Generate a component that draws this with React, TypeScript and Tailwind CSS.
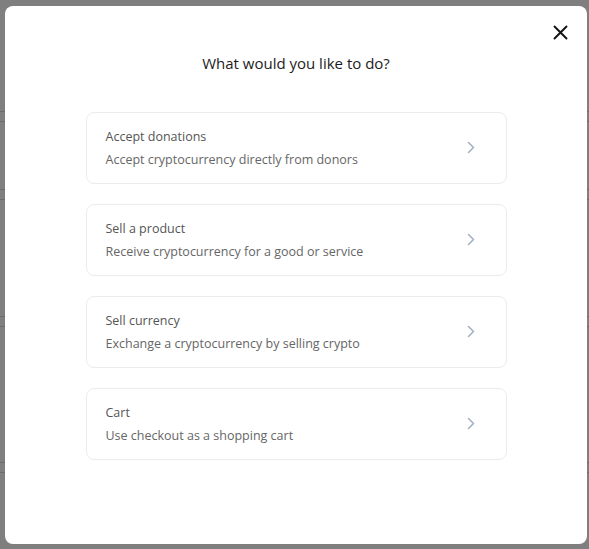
const options = [
  { title: "Accept donations", desc: "Accept cryptocurrency directly from donors" },
  { title: "Sell a product", desc: "Receive cryptocurrency for a good or service" },
  { title: "Sell currency", desc: "Exchange a cryptocurrency by selling crypto" },
  { title: "Cart", desc: "Use checkout as a shopping cart" },
];

function Chevron() {
  return (
    <svg width="8" height="13" viewBox="0 0 8 13" fill="none" className="shrink-0">
      <path d="M1.5 1.5L6.5 6.5L1.5 11.5" stroke="#a3b1c6" strokeWidth="1.6" strokeLinecap="round" strokeLinejoin="round" />
    </svg>
  );
}

export default function App() {
  return (
    <div className="relative h-[549px] w-[589px] overflow-hidden bg-white" style={{ fontFamily: '"Open Sans", "Noto Sans", sans-serif' }}>
      {/* page behind the overlay */}
      <div className="flex flex-col">
        <div className="h-[111px]" />
        <div className="h-[11px] border-y border-[#d6d6d6]" />
        <div className="h-[67px]" />
        <div className="h-[11px] border-y border-[#d6d6d6]" />
        <div className="h-[116px]" />
        <div className="h-[11px] border-y border-[#d6d6d6]" />
        <div className="h-[135px]" />
        <div className="h-[11px] border-y border-[#d6d6d6]" />
      </div>

      <div className="absolute inset-0 flex bg-black/50 pl-[5px] pr-[2px] pt-[6px] pb-[5px]">
        <div className="relative flex flex-1 flex-col items-center rounded-lg bg-white">
          <button className="absolute right-[17px] top-[17px] p-0.5">
            <svg width="15" height="15" viewBox="0 0 15 15" fill="none">
              <path d="M1.5 1.5L13.5 13.5M13.5 1.5L1.5 13.5" stroke="#111" strokeWidth="1.9" strokeLinecap="round" />
            </svg>
          </button>

          <h2 className="mt-[46px] text-[15px] font-medium text-[#1c1c1c]">What would you like to do?</h2>

          <div className="mt-[37px] flex w-[421px] flex-col gap-[20px]">
            {options.map((o) => (
              <div
                key={o.title}
                className="flex h-[72px] items-center justify-between rounded-lg border border-[#ececec] pl-[19px] pr-[31px]"
              >
                <div className="flex flex-col gap-[5px] pt-[2px]">
                  <div className="text-[12.5px] leading-[18px] font-medium text-[#555]">{o.title}</div>
                  <div className="text-[12.5px] leading-[18px] text-[#666]">{o.desc}</div>
                </div>
                <Chevron />
              </div>
            ))}
          </div>
        </div>
      </div>
    </div>
  );
}
